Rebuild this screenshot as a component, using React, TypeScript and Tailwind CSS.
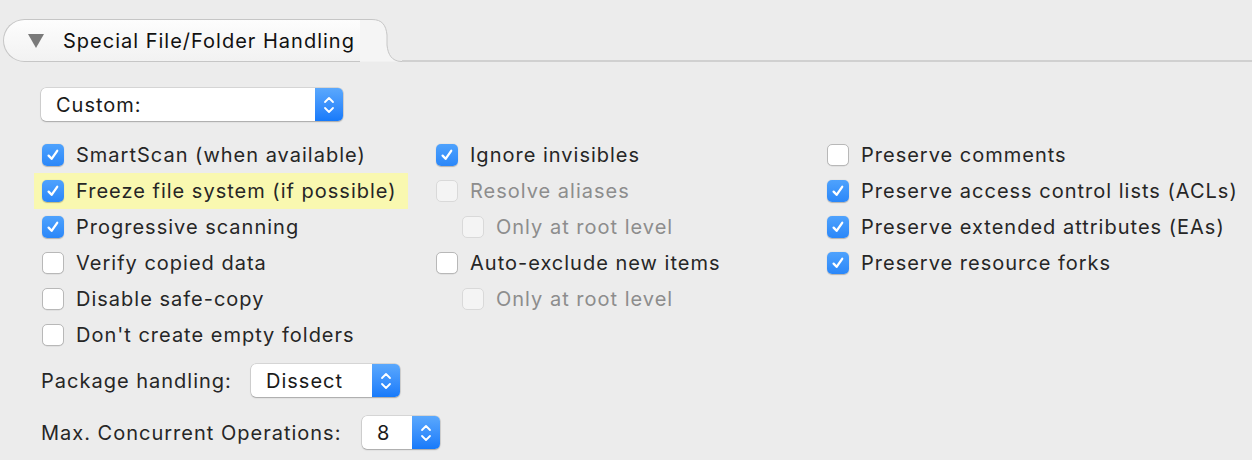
import React from 'react';

const Check = ({ checked = false, disabled = false }: { checked?: boolean; disabled?: boolean }) => {
  if (checked) {
    return (
      <span className="flex h-[22px] w-[22px] shrink-0 items-center justify-center rounded-[5px] bg-gradient-to-b from-[#4ea2fd] to-[#2a87f9] shadow-[0_0.5px_1px_rgba(0,0,0,0.25)]">
        <svg width="14" height="14" viewBox="0 0 14 14" fill="none">
          <path d="M2.6 7.6 L5.6 10.8 L11.2 2.8" stroke="white" strokeWidth="2.3" strokeLinecap="round" strokeLinejoin="round" />
        </svg>
      </span>
    );
  }
  return (
    <span
      className={
        disabled
          ? 'h-[22px] w-[22px] shrink-0 rounded-[5px] border border-[#d9d9d9] bg-[#f4f4f4]'
          : 'h-[22px] w-[22px] shrink-0 rounded-[5px] border border-[#b8b8b8] bg-white shadow-[0_0.5px_0.5px_rgba(0,0,0,0.1)]'
      }
    />
  );
};

const Row = ({
  label,
  checked,
  disabled,
  indent,
  highlight,
}: {
  label: string;
  checked?: boolean;
  disabled?: boolean;
  indent?: boolean;
  highlight?: boolean;
}) => (
  <div className={'flex h-[36px] items-center' + (indent ? ' pl-[26px]' : '')}>
    <div
      className={
        'flex h-[36px] items-center gap-[12px] ' + (highlight ? '-ml-[8px] bg-[#f9f8b0] pl-[8px] pr-[11px]' : '')
      }
    >
      <Check checked={checked} disabled={disabled} />
      <span className={disabled ? 'text-[#8d8d8d]' : 'text-[#262626]'}>{label}</span>
    </div>
  </div>
);

const Stepper = () => (
  <span className="flex w-[28px] shrink-0 items-center justify-center rounded-r-[5px] bg-gradient-to-b from-[#5aa8fd] to-[#167afa]">
    <svg width="12" height="22" viewBox="0 0 12 22" fill="none">
      <path d="M2 8 L6 4 L10 8" stroke="white" strokeWidth="1.8" strokeLinecap="round" strokeLinejoin="round" />
      <path d="M2 14 L6 18 L10 14" stroke="white" strokeWidth="1.8" strokeLinecap="round" strokeLinejoin="round" />
    </svg>
  </span>
);

const Popup = ({ value, width }: { value: string; width: string }) => (
  <div
    className={
      'flex h-[33px] rounded-[5px] bg-white shadow-[0_0_0_0.5px_rgba(0,0,0,0.18),0_1px_1.5px_rgba(0,0,0,0.22)] ' + width
    }
  >
    <span className="flex flex-1 items-center pl-[15px] text-[#1a1a1a]">{value}</span>
    <Stepper />
  </div>
);

export default function App() {
  return (
    <div
      className="h-[460px] w-[1252px] overflow-hidden bg-[#ececec] text-[20px] leading-none tracking-[0.05em]"
      style={{ fontFamily: 'Inter, "Open Sans", sans-serif' }}
    >
      {/* disclosure tab */}
      <div className="mt-[19px] flex h-[43px] pl-[3px]">
        <div className="flex h-[43px] w-[357px] items-center rounded-l-[22px] border border-r-0 border-[#c6c6c6] bg-gradient-to-b from-[#fdfdfd] to-[#f2f2f2] pl-[24px]">
          <svg width="16" height="14" viewBox="0 0 16 14">
            <path d="M0 0 H16 L8 14 Z" fill="#7a7a7a" />
          </svg>
          <span className="ml-[19px] text-[#111]">Special File/Folder Handling</span>
        </div>
        <svg width="42" height="43" viewBox="0 0 42 43" className="shrink-0">
          <path d="M0 0.5 H12 C22 0.5 26 6 27 16 V26 C28 36 32 42 41 42.5 H0 Z" fill="#f5f5f5" />
          <path d="M0 0.5 H12 C22 0.5 26 6 27 16 V26 C28 36 32 42 41 42.5 H42" fill="none" stroke="#c6c6c6" strokeWidth="1" />
        </svg>
        <div className="flex-1 border-b-2 border-[#d0d0d0]" />
      </div>

      <div className="pl-[41px]">
        <div className="mt-[26px]">
          <Popup value="Custom:" width="w-[302px]" />
        </div>

        <div className="mt-[16px] flex">
          <div className="w-[395px] pl-[1px]">
            <Row label="SmartScan (when available)" checked />
            <Row label="Freeze file system (if possible)" checked highlight />
            <Row label="Progressive scanning" checked />
            <Row label="Verify copied data" />
            <Row label="Disable safe-copy" />
            <Row label="Don't create empty folders" />
          </div>
          <div className="w-[391px]">
            <Row label="Ignore invisibles" checked />
            <Row label="Resolve aliases" disabled />
            <Row label="Only at root level" disabled indent />
            <Row label="Auto-exclude new items" />
            <Row label="Only at root level" disabled indent />
          </div>
          <div>
            <Row label="Preserve comments" />
            <Row label="Preserve access control lists (ACLs)" checked />
            <Row label="Preserve extended attributes (EAs)" checked />
            <Row label="Preserve resource forks" checked />
          </div>
        </div>

        <div className="mt-[11px] flex items-center">
          <span className="w-[210px] text-[#262626]">Package handling:</span>
          <Popup value="Dissect" width="w-[149px]" />
        </div>
        <div className="mt-[19px] flex items-center">
          <span className="w-[321px] text-[#262626]">Max. Concurrent Operations:</span>
          <Popup value="8" width="w-[78px]" />
        </div>
      </div>
    </div>
  );
}
